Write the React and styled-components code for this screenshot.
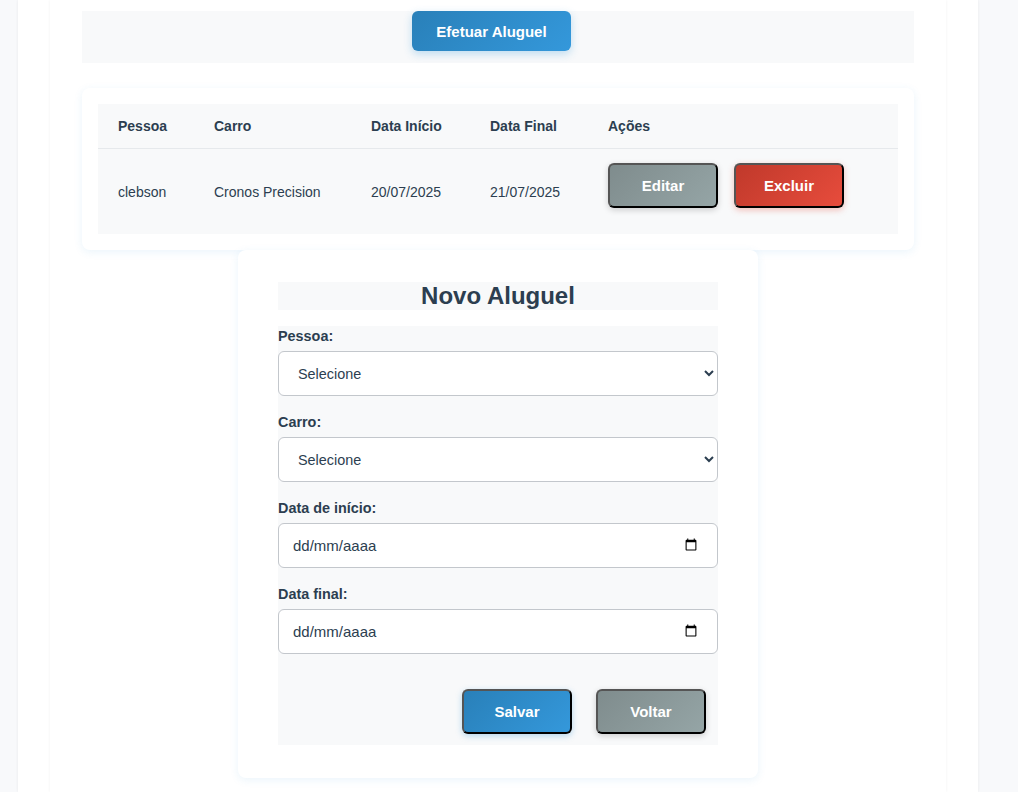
import React from 'react';
import styled, { createGlobalStyle, css } from 'styled-components';

const GlobalStyle = createGlobalStyle`
  html, body {
    margin: 0;
    padding: 0;
    background: #f8f9fb;
    font-family: "Liberation Sans", Arial, sans-serif;
    color: #2c3e50;
  }
`;

const Shell = styled.div`
  margin-left: 18px;
  width: 960px;
  min-height: 792px;
  background: #fff;
  box-shadow: 0 0 3px rgba(0, 0, 0, 0.07);
`;

const Page = styled.main`
  margin: 0 32px;
  min-height: 792px;
  padding: 11px 32px 0;
  box-sizing: border-box;
  background: #fff;
  box-shadow: 0 0 3px rgba(0, 0, 0, 0.06);
`;

const TopBar = styled.div`
  background: #f8f9fa;
  height: 52px;
  text-align: center;
  margin-bottom: 25px;
`;

const gradients = {
  blue: 'linear-gradient(135deg, #2980b9, #3498db)',
  gray: 'linear-gradient(135deg, #7f8c8d, #95a5a6)',
  red: 'linear-gradient(135deg, #c0392b, #e74c3c)',
};

const glows = {
  blue: 'rgba(52, 152, 219, 0.35)',
  gray: 'rgba(0, 0, 0, 0.18)',
  red: 'rgba(231, 76, 60, 0.35)',
};

const PrimaryButton = styled.button`
  height: 40px;
  width: 159px;
  margin-right: 13px;
  border: none;
  border-radius: 6px;
  background: ${gradients.blue};
  color: #fff;
  font-family: inherit;
  font-size: 15px;
  font-weight: bold;
  box-shadow: 0 3px 8px rgba(52, 152, 219, 0.3);
  cursor: pointer;
`;

const ActionButton = styled.button`
  width: 110px;
  height: 45px;
  box-sizing: border-box;
  border-width: 2px;
  border-style: solid;
  border-color: #555 #000 #000 #555;
  border-radius: 6px;
  background: ${p => gradients[p.$tone]};
  color: #fff;
  font-family: inherit;
  font-size: 15px;
  font-weight: bold;
  box-shadow: 0 2px 6px ${p => glows[p.$tone]};
  cursor: pointer;
  ${p =>
    p.$inRow &&
    css`
      margin: 0 16px 12px 0;
      vertical-align: top;
    `}
`;

const Card = styled.section`
  background: #fff;
  border-radius: 8px;
  box-shadow: 0 2px 8px rgba(52, 152, 219, 0.1);
`;

const TableCard = styled(Card)`
  padding: 16px;
`;

const Table = styled.table`
  width: 100%;
  border-collapse: collapse;
  background: #f8f9fa;
  font-size: 14px;
  table-layout: fixed;
`;

const Th = styled.th`
  text-align: left;
  font-weight: bold;
  padding: 14px 20px;
  height: 44px;
  box-sizing: border-box;
  border-bottom: 1px solid #e6e9ec;
  color: #2c3e50;
`;

const Td = styled.td`
  padding: 14px 20px;
  vertical-align: middle;
  color: #2c3e50;
  white-space: nowrap;
`;

const FormCard = styled(Card)`
  width: 520px;
  margin: 0 auto;
  box-sizing: border-box;
  padding: 32px 40px 33px;
`;

const Title = styled.h2`
  margin: 0 0 16px;
  background: #f8f9fa;
  text-align: center;
  font-size: 24px;
  line-height: 28px;
  color: #2c3e50;
`;

const Form = styled.form`
  background: #f8f9fa;
  padding-bottom: 11px;
`;

const Field = styled.div`
  display: flex;
  flex-direction: column;
  margin-bottom: 16px;
  &:last-of-type {
    margin-bottom: 0;
  }
`;

const Label = styled.label`
  font-size: 14.4px;
  font-weight: bold;
  line-height: 21px;
  margin-bottom: 4px;
  color: #2c3e50;
`;

const control = css`
  height: 45px;
  width: 100%;
  box-sizing: border-box;
  border: 1px solid #c3c7cc;
  border-radius: 6px;
  background: #fff;
  padding: 0 14px;
  font-family: inherit;
  font-size: 14.4px;
  color: #2c3e50;
`;

const Select = styled.select`
  ${control}
  padding-left: 15px;
`;

const DateWrap = styled.div`
  position: relative;
`;

const DateInput = styled.input`
  ${control}
  display: block;
  padding-right: 17px;
  &::-webkit-datetime-edit {
    color: transparent;
  }
`;

const DateMask = styled.span`
  position: absolute;
  left: 15px;
  top: 0;
  line-height: 45px;
  font-size: 15px;
  color: #2c3e50;
  pointer-events: none;
`;

const Actions = styled.div`
  display: flex;
  justify-content: flex-end;
  gap: 24px;
  padding-right: 12px;
  margin-top: 35px;
`;

const rentals = [
  { pessoa: 'clebson', carro: 'Cronos Precision', inicio: '20/07/2025', fim: '21/07/2025' },
];

function DateField({ id, label }) {
  return (
    <Field>
      <Label htmlFor={id}>{label}</Label>
      <DateWrap>
        <DateInput id={id} type="date" lang="pt-BR" />
        <DateMask>dd/mm/aaaa</DateMask>
      </DateWrap>
    </Field>
  );
}

export default function App() {
  return (
    <>
      <GlobalStyle />
      <Shell>
        <Page>
          <TopBar>
            <PrimaryButton>Efetuar Aluguel</PrimaryButton>
          </TopBar>

          <TableCard>
            <Table>
              <colgroup>
                <col style={{ width: 96 }} />
                <col style={{ width: 157 }} />
                <col style={{ width: 119 }} />
                <col style={{ width: 118 }} />
                <col />
              </colgroup>
              <thead>
                <tr>
                  <Th>Pessoa</Th>
                  <Th>Carro</Th>
                  <Th>Data Início</Th>
                  <Th>Data Final</Th>
                  <Th>Ações</Th>
                </tr>
              </thead>
              <tbody>
                {rentals.map(r => (
                  <tr key={r.pessoa}>
                    <Td>{r.pessoa}</Td>
                    <Td>{r.carro}</Td>
                    <Td>{r.inicio}</Td>
                    <Td>{r.fim}</Td>
                    <Td>
                      <ActionButton $tone="gray" $inRow>Editar</ActionButton>
                      <ActionButton $tone="red" $inRow>Excluir</ActionButton>
                    </Td>
                  </tr>
                ))}
              </tbody>
            </Table>
          </TableCard>

          <FormCard>
            <Title>Novo Aluguel</Title>
            <Form onSubmit={e => e.preventDefault()}>
              <Field>
                <Label htmlFor="pessoa">Pessoa:</Label>
                <Select id="pessoa" defaultValue="">
                  <option value="">Selecione</option>
                </Select>
              </Field>
              <Field>
                <Label htmlFor="carro">Carro:</Label>
                <Select id="carro" defaultValue="">
                  <option value="">Selecione</option>
                </Select>
              </Field>
              <DateField id="inicio" label="Data de início:" />
              <DateField id="fim" label="Data final:" />
              <Actions>
                <ActionButton $tone="blue" type="submit">Salvar</ActionButton>
                <ActionButton $tone="gray" type="button">Voltar</ActionButton>
              </Actions>
            </Form>
          </FormCard>
        </Page>
      </Shell>
    </>
  );
}
